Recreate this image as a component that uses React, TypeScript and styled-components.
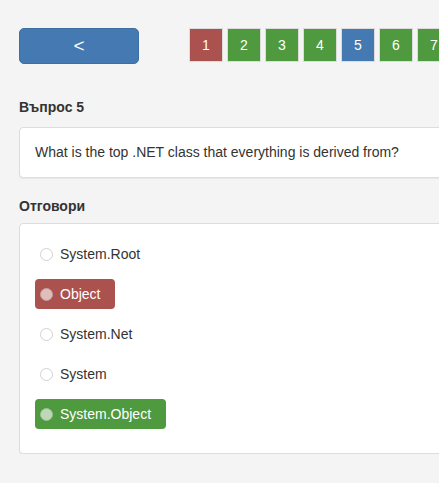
import React from "react";
import styled, { createGlobalStyle } from "styled-components";

const Global = createGlobalStyle`
  html, body { margin: 0; padding: 0; overflow: hidden; }
  body {
    background: #f4f4f4;
    font-family: "Liberation Sans", Arial, sans-serif;
    color: #333;
  }
`;

const Page = styled.div`
  width: 620px;
  padding: 28px 0 0 19px;
  box-sizing: border-box;
`;

const TopBar = styled.div`
  display: flex;
  align-items: flex-start;
  gap: 50px;
`;

const BackButton = styled.button`
  width: 120px;
  height: 36px;
  background: #4579b2;
  border: 1px solid #3f6ea3;
  border-radius: 5px;
  color: #fff;
  font-family: "Liberation Sans", Arial, sans-serif;
  font-size: 19px;
  line-height: 1;
  padding: 0 0 2px;
  cursor: pointer;
`;

const Pager = styled.div`
  display: flex;
  gap: 4px;
`;

const PageBox = styled.div<{ $tone: "red" | "green" | "blue" }>`
  width: 34px;
  height: 34px;
  box-sizing: border-box;
  border: 1px solid #dcdcdc;
  background: ${(p) =>
    p.$tone === "red" ? "#ab514e" : p.$tone === "blue" ? "#4579b2" : "#4f993f"};
  color: #fff;
  font-size: 14px;
  display: flex;
  align-items: center;
  justify-content: center;
`;

const Heading = styled.h4`
  margin: 0;
  font-size: 14px;
  font-weight: bold;
  line-height: 18px;
  color: #333;
`;

const QuestionHeading = styled(Heading)`
  margin-top: 34px;
  margin-bottom: 11px;
`;

const AnswersHeading = styled(Heading)`
  margin-top: 19px;
  margin-bottom: 8px;
`;

const Well = styled.div`
  background: #fff;
  border: 1px solid #dddddd;
  border-radius: 4px;
  box-shadow: 0 1px 1px rgba(0, 0, 0, 0.05);
`;

const QuestionWell = styled(Well)`
  padding: 15px;
  font-size: 14px;
  line-height: 19px;
`;

const AnswersWell = styled(Well)`
  padding: 15px 15px 24px;
  display: flex;
  flex-direction: column;
  align-items: flex-start;
  gap: 10px;
`;

const Answer = styled.label<{ $tone?: "red" | "green" }>`
  display: flex;
  align-items: center;
  gap: 7px;
  height: 30px;
  box-sizing: border-box;
  padding: 0 15px 0 5px;
  border-radius: 4px;
  font-size: 14px;
  background: ${(p) =>
    p.$tone === "red" ? "#ab514e" : p.$tone === "green" ? "#4f993f" : "transparent"};
  color: ${(p) => (p.$tone ? "#fff" : "#333")};
`;

const Radio = styled.span<{ $muted?: boolean }>`
  width: 13px;
  height: 13px;
  box-sizing: border-box;
  border-radius: 50%;
  border: 1px solid #d2d2d2;
  background: #fff;
  opacity: ${(p) => (p.$muted ? 0.62 : 1)};
  flex: none;
`;

const pages: { n: number; tone: "red" | "green" | "blue" }[] = [
  { n: 1, tone: "red" },
  { n: 2, tone: "green" },
  { n: 3, tone: "green" },
  { n: 4, tone: "green" },
  { n: 5, tone: "blue" },
  { n: 6, tone: "green" },
  { n: 7, tone: "green" },
  { n: 8, tone: "green" },
];

const answers: { text: string; tone?: "red" | "green" }[] = [
  { text: "System.Root" },
  { text: "Object", tone: "red" },
  { text: "System.Net" },
  { text: "System" },
  { text: "System.Object", tone: "green" },
];

export default function App() {
  return (
    <>
      <Global />
      <Page>
        <TopBar>
          <BackButton>&lt;</BackButton>
          <Pager>
            {pages.map((p) => (
              <PageBox key={p.n} $tone={p.tone}>
                {p.n}
              </PageBox>
            ))}
          </Pager>
        </TopBar>
        <QuestionHeading>Въпрос 5</QuestionHeading>
        <QuestionWell>What is the top .NET class that everything is derived from?</QuestionWell>
        <AnswersHeading>Отговори</AnswersHeading>
        <AnswersWell>
          {answers.map((a) => (
            <Answer key={a.text} $tone={a.tone}>
              <Radio $muted={!!a.tone} />
              {a.text}
            </Answer>
          ))}
        </AnswersWell>
      </Page>
    </>
  );
}
